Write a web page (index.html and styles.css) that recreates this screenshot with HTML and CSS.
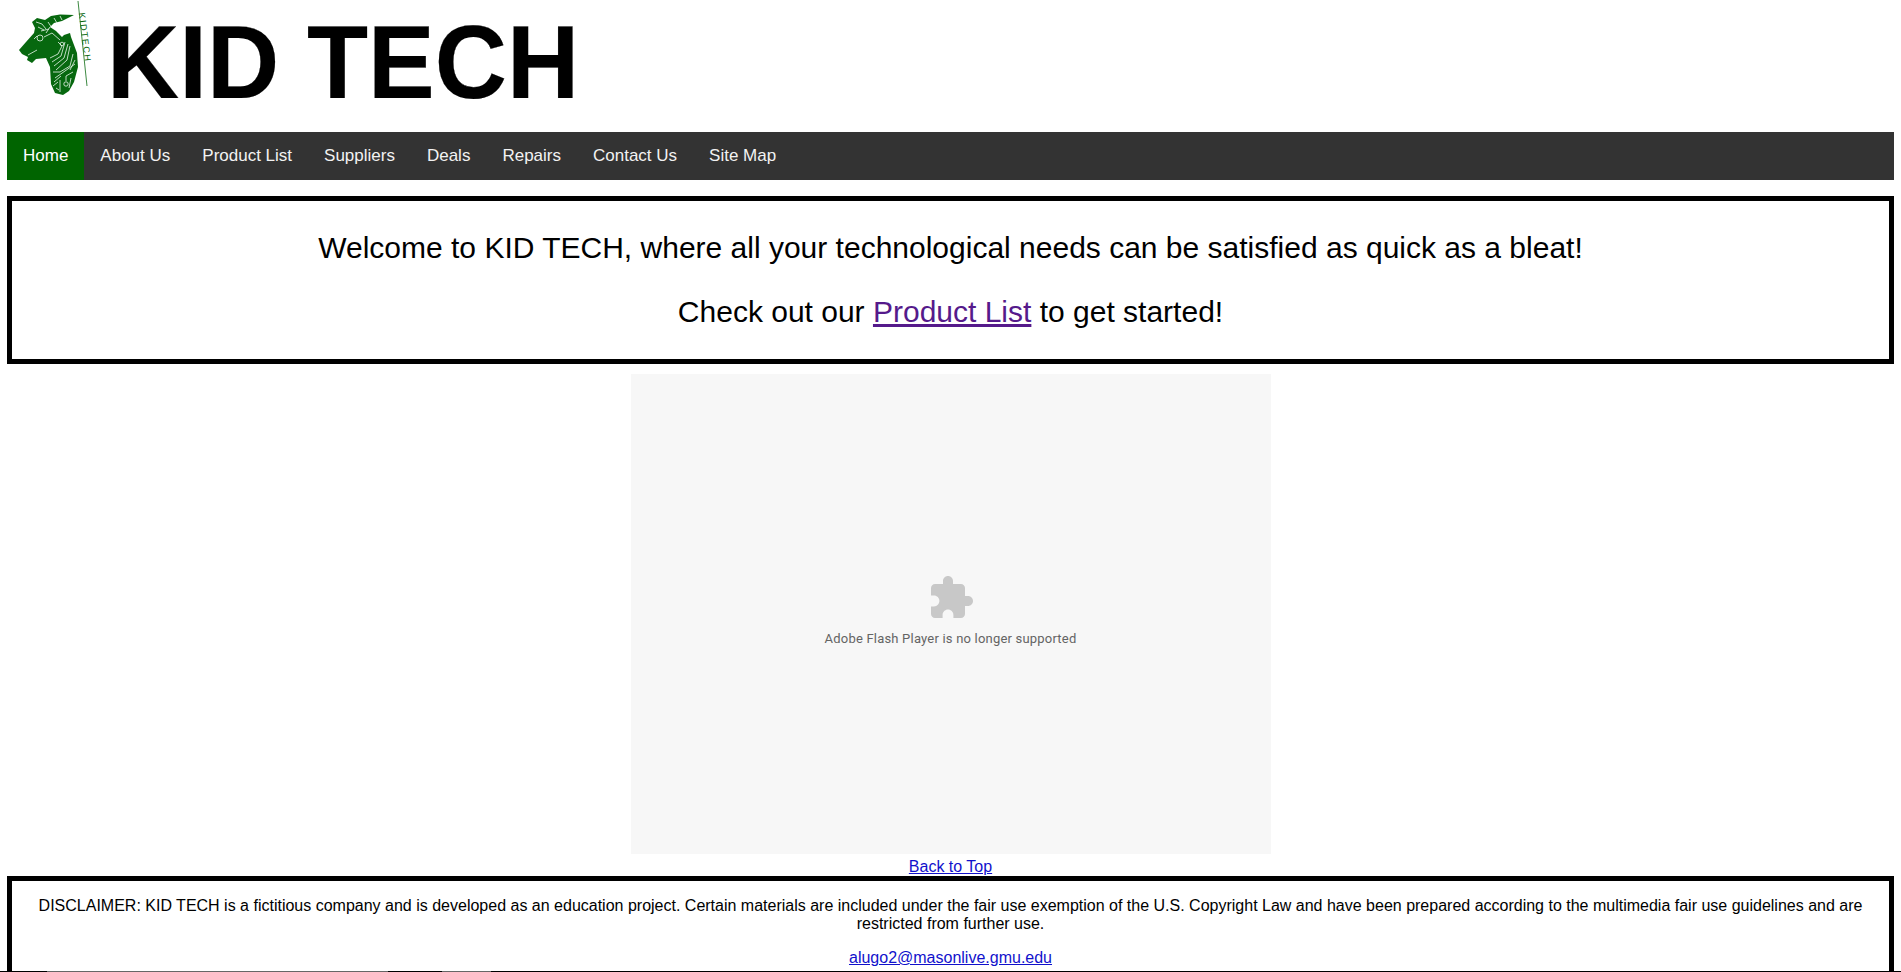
FILE: index.html
```html
<!DOCTYPE html>
<html lang="en">
<head>
<meta charset="utf-8">
<title>KID TECH</title>
<link rel="stylesheet" href="styles.css">
</head>
<body>
<header class="brand">
  <svg class="logo" viewBox="10 0 90 100" width="90" height="100" aria-hidden="true">
    <path class="logo-fill" d="M19 50 L26 42 L34 33 L35 28 L32 22 L37 18 L45 20 L51 16 L60 14.5 L74 15 L68 18 L62 21 L54 23 L50 27 L56 31 L62 37 L64 35 L70 33 L71 37 L77 53 L78 67 L74 82 L69 91 L63 95 L55 93 L51 84 L50 67 L46 58 L36 59 L32 63 L27 60 L28 57 L22 54 Z"/>
    <path class="logo-line" d="M28 55 L37 50 M34 39 L37 36 M44 37 L52 33 L60 40 M46 33 L50 27 M41 31 L49 29 M48 22 L52 28 M54 18 L57 23 M60 16 L62 20 M36 22 L42 24 L46 29 M38 27 L44 30 M58 42 L62 46 L58 54 L50 58 M65 42 L61 56 L52 62 M68 44 L64 58 L54 66 M70 46 L67 60 L56 70 M73 54 L70 66 L60 72 L53 72 M75 60 L70 70 M75 64 L55 78 M73 72 L66 76 L66 81 M61 76 L54 82 M60 80 L60 92 M53 86 L58 82 M71 78 L69 88 M56 88 L59 90"/>
    <circle class="logo-ring" cx="40" cy="38" r="3"/>
    <circle class="logo-ring" cx="66" cy="84" r="2.2"/>
    <circle class="logo-ring" cx="62" cy="44" r="1.8"/>
    <path class="logo-stem" d="M78 1 L87 86"/>
    <text class="logo-text" x="77" y="15" transform="rotate(83 79 15)">KIDTECH</text>
  </svg>
  <h1 class="brand-name">KID TECH</h1>
</header>
<nav class="topnav">
  <a class="topnav-link is-active" href="#">Home</a>
  <a class="topnav-link" href="#">About Us</a>
  <a class="topnav-link" href="#">Product List</a>
  <a class="topnav-link" href="#">Suppliers</a>
  <a class="topnav-link" href="#">Deals</a>
  <a class="topnav-link" href="#">Repairs</a>
  <a class="topnav-link" href="#">Contact Us</a>
  <a class="topnav-link" href="#">Site Map</a>
</nav>
<section class="welcome">
  <p class="welcome-line">Welcome to KID TECH, where all your technological needs can be satisfied as quick as a bleat!</p>
  <p class="welcome-line">Check out our <a class="visited-link" href="#">Product List</a> to get started!</p>
</section>
<div class="flash">
  <svg class="puzzle" viewBox="0 0 24 24" width="48" height="48" aria-hidden="true">
    <path d="M20.5 11H19V7c0-1.1-.9-2-2-2h-4V3.5C13 2.12 11.88 1 10.5 1S8 2.12 8 3.5V5H4c-1.1 0-1.99.9-1.99 2v3.8H3.5c1.49 0 2.7 1.21 2.7 2.7s-1.21 2.7-2.7 2.7H2V20c0 1.1.9 2 2 2h3.8v-1.5c0-1.49 1.21-2.7 2.7-2.7 1.49 0 2.7 1.21 2.7 2.7V22H17c1.1 0 2-.9 2-2v-4h1.5c1.38 0 2.5-1.12 2.5-2.5S21.88 11 20.5 11z"/>
  </svg>
  <p class="flash-text">Adobe Flash Player is no longer supported</p>
</div>
<p class="back"><a href="#">Back to Top</a></p>
<footer class="disclaimer">
  <p class="disclaimer-text">DISCLAIMER: KID TECH is a fictitious company and is developed as an education project. Certain materials are included under the fair use exemption of the U.S. Copyright Law and have been prepared according to the multimedia fair use guidelines and are restricted from further use.</p>
  <p class="disclaimer-mail"><a href="#">alugo2@masonlive.gmu.edu</a></p>
</footer>
<div class="edge-line"></div>
</body>
</html>
```
FILE: styles.css
```css
html, body {
  margin: 0;
  background: #fff;
}
body {
  position: relative;
  padding: 0 7px;
  font-family: "Liberation Sans", Arial, sans-serif;
  color: #000;
  height: 972px;
  overflow: hidden;
  box-sizing: border-box;
}
.brand {
  display: flex;
  align-items: flex-start;
  height: 132px;
}
.logo {
  flex: none;
  width: 90px;
  height: 100px;
  margin-left: 3px;
}
.logo-fill { fill: #07680f; }
.logo-line { fill: none; stroke: #eef8ef; stroke-width: 0.8; }
.logo-ring { fill: none; stroke: #eef8ef; stroke-width: 0.8; }
.logo-stem { fill: none; stroke: #0b6b12; stroke-width: 0.8; }
.logo-text { font: 9px "Liberation Sans", sans-serif; fill: #07680f; letter-spacing: 1.5px; }
.brand-name {
  margin: 6px 0 0 7px;
  font-size: 100px;
  line-height: 115px;
  font-weight: 700;
  white-space: nowrap;
  -webkit-text-stroke: 0.2px #000;
  transform: scaleY(1.0465);
  transform-origin: 0 92px;
}
.topnav {
  display: flex;
  background: #333;
  height: 48px;
}
.topnav-link {
  padding: 14px 16px;
  font-size: 17px;
  line-height: 20px;
  color: #f2f2f2;
  text-decoration: none;
}
.topnav-link.is-active {
  background: #006400;
  color: #fff;
}
.welcome {
  margin-top: 16px;
  border: 5px solid #000;
  height: 168px;
  box-sizing: border-box;
  text-align: center;
  font-size: 30px;
  line-height: 37px;
  padding-top: 28px;
}
.welcome-line { margin: 0 0 27px; }
.visited-link { color: #551a8b; }
.flash {
  width: 640px;
  height: 480px;
  margin: 10px auto 0;
  background: #f7f7f7;
  display: flex;
  flex-direction: column;
  align-items: center;
  padding-top: 200px;
  box-sizing: border-box;
}
.puzzle { fill: #c8c8c8; flex: none; }
.flash-text {
  margin: 9px 0 0;
  font-family: Roboto, sans-serif;
  font-size: 13px;
  letter-spacing: 0.2px;
  line-height: 16px;
  color: #646464;
}
.back {
  margin: 4px 0 0;
  text-align: center;
  font-size: 16px;
  line-height: 18px;
}
.back a, .disclaimer-mail a { color: #1111cc; }
.disclaimer {
  border: 5px solid #000;
  padding: 16px 20px;
  text-align: center;
  font-size: 16px;
  line-height: 18px;
}
.disclaimer-text { margin: 0 0 16px; }
.disclaimer-mail { margin: 0; }
.edge-line {
  position: absolute;
  left: 0;
  right: 0;
  bottom: 0;
  height: 1px;
  background: linear-gradient(to right, #000 47px, #666 47px, #666 388px, #000 388px, #000 442px, #666 442px, #666 491px, #000 491px);
}
```
